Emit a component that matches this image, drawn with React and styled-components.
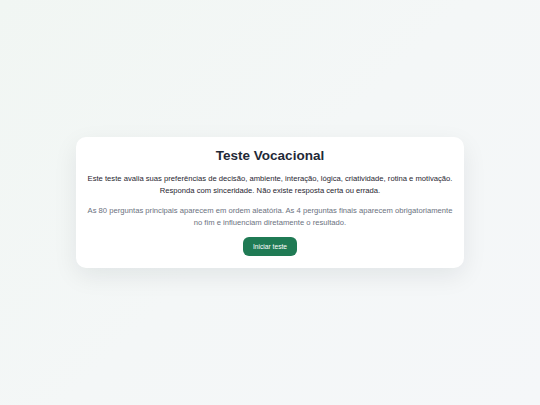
import styled, { createGlobalStyle } from 'styled-components';

let GlobalStyle = createGlobalStyle`
    * { box-sizing: border-box; }
    html, body {
        margin: 0;
        padding: 0;
        height: 100%;
    }
    body {
        font-family: "Liberation Sans", Arial, sans-serif;
        background: linear-gradient(135deg, #f1f6f3 0%, #f4f7f7 50%, #f5f7f9 100%);
        -webkit-font-smoothing: antialiased;
    }
    #root { height: 100%; }
`

let App = () => {
    return (
        <>
            <GlobalStyle />
            <Page>
                <Card>
                    <Title>Teste Vocacional</Title>
                    <Lead>
                        Este teste avalia suas preferências de decisão, ambiente, interação, lógica, criatividade, rotina e motivação.
                        <br />
                        Responda com sinceridade. Não existe resposta certa ou errada.
                    </Lead>
                    <Note>
                        As 80 perguntas principais aparecem em ordem aleatória. As 4 perguntas finais aparecem obrigatoriamente
                        no fim e influenciam diretamente o resultado.
                    </Note>
                    <StartButton>Iniciar teste</StartButton>
                </Card>
            </Page>
        </>
    )
}

let Page = styled.div`
    width: 100%;
    height: 100vh;
    display: flex;
    align-items: center;
    justify-content: center;
`

let Card = styled.div`
    width: 388px;
    background: #ffffff;
    border-radius: 10px;
    box-shadow: 0 8px 24px rgba(15, 23, 42, 0.08);
    padding: 11px 10px 12px;
    display: flex;
    flex-direction: column;
    align-items: center;
    text-align: center;
`

let Title = styled.h1`
    margin: 0 0 9px;
    font-size: 13.5px;
    font-weight: 700;
    color: #1f2937;
    line-height: 16px;
`

let Lead = styled.p`
    margin: 0 0 9px;
    font-size: 7.65px;
    line-height: 11.5px;
    color: #1f2530;
`

let Note = styled.p`
    margin: 0 0 8px;
    font-size: 7.65px;
    line-height: 12px;
    color: #6b7280;
`

let StartButton = styled.button`
    font-family: inherit;
    font-size: 6.7px;
    color: #ffffff;
    background: #1f7a54;
    border: none;
    border-radius: 6px;
    height: 19px;
    width: 54px;
    padding: 0;
    cursor: pointer;
`

export default App;
